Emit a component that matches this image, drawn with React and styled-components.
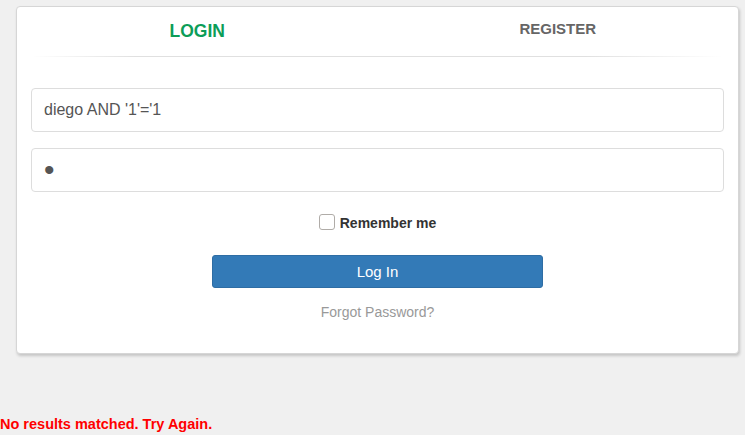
import React from 'react'
import styled, { createGlobalStyle } from 'styled-components'

const GlobalStyle = createGlobalStyle`
    body{
        margin: 0;
        background-color: #f0f0f0;
        font-family: "Liberation Sans", Arial, sans-serif;
    }
`

const Page = styled.div`
    padding: 6px 6px 0 16px;
`

const Card = styled.section`
    width: 723px;
    height: 348px;
    box-sizing: border-box;
    background-color: white;
    border: 1px solid #d6d6d6;
    border-radius: 4px;
    box-shadow: 1px 2px 3px rgba(0,0,0,0.18);
`

const Tabs = styled.nav`
    display: grid;
    grid-template-columns: 1fr 1fr;
    height: 49px;
`

const Tab = styled.a`
    display: flex;
    justify-content: center;
    align-items: center;
    padding-bottom: ${p => p.active ? '0' : '6px'};
    font-weight: bold;
    font-size: ${p => p.active ? '17.5px' : '15px'};
    color: ${p => p.active ? '#0c9d58' : '#666'};
    text-decoration: none;
`

const Divider = styled.hr`
    margin: 0 14px 31px;
    border: 0;
    height: 1px;
    background-image: linear-gradient(to right, rgba(0,0,0,0), rgba(0,0,0,0.12) 15%, rgba(0,0,0,0.12) 80%, rgba(0,0,0,0));
`

const Form = styled.form`
    display: flex;
    flex-direction: column;
    align-items: center;
    padding: 0 14px;
`

const Field = styled.input`
    width: 100%;
    height: 44px;
    box-sizing: border-box;
    margin-bottom: 16px;
    padding: 0 12px;
    border: 1px solid #ddd;
    border-radius: 4px;
    font-family: "Liberation Sans", Arial, sans-serif;
    font-size: ${p => p.type === 'password' ? '30px' : '16px'};
    color: #555;
    outline: none;
`

const CheckRow = styled.label`
    display: flex;
    align-items: center;
    gap: 5px;
    height: 25px;
    margin-top: 2px;
    font-size: 14px;
    font-weight: bold;
    color: #333;
`

const Check = styled.input`
    appearance: none;
    margin: 0 0 2px;
    width: 16px;
    height: 16px;
    box-sizing: border-box;
    border: 1px solid #b0aca8;
    border-radius: 3px;
    background: white;
`

const Submit = styled.button`
    width: 331px;
    height: 33px;
    margin-top: 20px;
    background-color: #337ab7;
    border: 1px solid #2e6da4;
    border-radius: 3px;
    color: white;
    font-family: "Liberation Sans", Arial, sans-serif;
    font-size: 15px;
`

const Forgot = styled.a`
    margin-top: 16px;
    font-size: 14px;
    color: #999;
    text-decoration: none;
`

const ErrorMsg = styled.p`
    margin: 62px 0 0 -16px;
    font-size: 14.5px;
    font-weight: bold;
    color: red;
`

const App = () => {
    return (
        <Page>
            <GlobalStyle/>
            <Card>
                <Tabs>
                    <Tab href="#" active>LOGIN</Tab>
                    <Tab href="#">REGISTER</Tab>
                </Tabs>
                <Divider/>
                <Form onSubmit={e => e.preventDefault()}>
                    <Field type="text" defaultValue="diego AND '1'='1"/>
                    <Field type="password" defaultValue="1"/>
                    <CheckRow>
                        <Check type="checkbox"/>
                        Remember me
                    </CheckRow>
                    <Submit type="submit">Log In</Submit>
                    <Forgot href="#">Forgot Password?</Forgot>
                </Form>
            </Card>
            <ErrorMsg>No results matched. Try Again.</ErrorMsg>
        </Page>
    )
}

export default App
